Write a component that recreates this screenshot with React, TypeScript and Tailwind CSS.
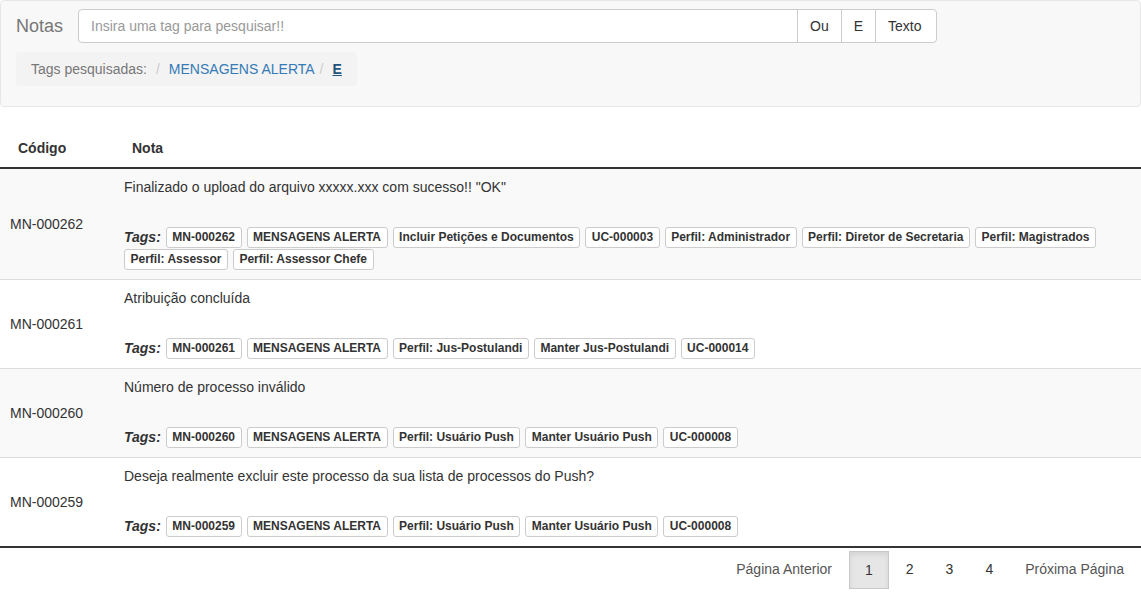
import React, { FC } from "react";

type Nota = {
  codigo: string;
  texto: string;
  tags: string[];
};

const notas: Nota[] = [
  {
    codigo: "MN-000262",
    texto: 'Finalizado o upload do arquivo xxxxx.xxx com sucesso!! "OK"',
    tags: [
      "MN-000262",
      "MENSAGENS ALERTA",
      "Incluir Petições e Documentos",
      "UC-000003",
      "Perfil: Administrador",
      "Perfil: Diretor de Secretaria",
      "Perfil: Magistrados",
      "Perfil: Assessor",
      "Perfil: Assessor Chefe",
    ],
  },
  {
    codigo: "MN-000261",
    texto: "Atribuição concluída",
    tags: [
      "MN-000261",
      "MENSAGENS ALERTA",
      "Perfil: Jus-Postulandi",
      "Manter Jus-Postulandi",
      "UC-000014",
    ],
  },
  {
    codigo: "MN-000260",
    texto: "Número de processo inválido",
    tags: [
      "MN-000260",
      "MENSAGENS ALERTA",
      "Perfil: Usuário Push",
      "Manter Usuário Push",
      "UC-000008",
    ],
  },
  {
    codigo: "MN-000259",
    texto: "Deseja realmente excluir este processo da sua lista de processos do Push?",
    tags: [
      "MN-000259",
      "MENSAGENS ALERTA",
      "Perfil: Usuário Push",
      "Manter Usuário Push",
      "UC-000008",
    ],
  },
];

const Tag: FC<{ label: string }> = ({ label }) => (
  <span className="inline-block rounded-[3px] border border-[#ccc] bg-white px-[5.5px] py-[1px] text-[12px] font-bold leading-[17px] text-[#333]">
    {label}
  </span>
);

const SearchBar: FC = () => (
  <div className="rounded-[4px] border border-[#e7e7e7] bg-[#f8f8f8] px-[15px] pt-[8px] pb-[20px]">
    <div className="flex items-center">
      <span className="text-[18px] leading-[20px] text-[#777]">Notas</span>
      <div className="ml-[15px] flex">
        <input
          className="h-[34px] w-[720px] rounded-l-[4px] border border-[#ccc] bg-white px-[12px] text-[14px] text-[#555] outline-none placeholder:text-[#999]"
          placeholder="Insira uma tag para pesquisar!!"
        />
        {["Ou", "E", "Texto"].map((b, i) => (
          <button
            key={b}
            className={
              "-ml-px h-[34px] border border-[#ccc] bg-white px-[12px] text-[14px] text-[#333] " +
              (i === 2 ? "rounded-r-[4px] pr-[14px]" : "")
            }
          >
            {b}
          </button>
        ))}
      </div>
    </div>
    <div className="mt-[9px] inline-flex items-center rounded-[4px] bg-[#f3f3f3] px-[15px] py-[7px] text-[14px] leading-[20px]">
      <span className="text-[#777]">Tags pesquisadas:</span>
      <span className="ml-[4px] px-[5px] text-[#ccc]">/</span>
      <span className="ml-[4px] text-[#337ab7]">MENSAGENS ALERTA</span>
      <span className="px-[5px] text-[#ccc]">/</span>
      <span className="ml-[4px] font-bold text-[#23527c] underline">E</span>
    </div>
  </div>
);

const Pagination: FC = () => {
  const item = "mx-[1px] px-[15px] py-[8px] leading-[20px]";
  return (
    <div className="mt-[3px] flex justify-end pr-px text-[14px] text-[#555]">
      <span className={item}>Página Anterior</span>
      <span
        className={
          item +
          " border border-[#c8c8c8] bg-[#e6e6e6] py-[7px] text-[#333] shadow-[inset_0_3px_5px_rgba(0,0,0,0.08)]"
        }
      >
        1
      </span>
      <span className={item + " text-[#333]"}>2</span>
      <span className={item + " text-[#333]"}>3</span>
      <span className={item + " text-[#333]"}>4</span>
      <span className={item}>Próxima Página</span>
    </div>
  );
};

const App: FC = () => {
  return (
    <div className="min-h-[600px] w-[1141px] bg-white font-['Liberation_Sans',Arial,sans-serif] text-[14px] text-[#333]">
      <SearchBar />

      <div className="mt-[22px]">
        <div className="flex border-b-2 border-[#333] py-[9px] font-bold leading-[20px]">
          <div className="w-[114px] pl-[18px]">Código</div>
          <div className="pl-[18px]">Nota</div>
        </div>

        {notas.map((n, i) => (
          <div
            key={n.codigo}
            className={
              "flex items-center " +
              (i % 2 === 0 ? "bg-[#f9f9f9] " : "bg-white ") +
              (i > 0 ? "border-t border-[#ddd] " : "") +
              (i === notas.length - 1 ? "border-b-2 border-b-[#333]" : "")
            }
          >
            <div className="w-[114px] shrink-0 pl-[10px] leading-[20px]">{n.codigo}</div>
            <div className="flex-1 pt-[8px] pr-[8px] pb-[9px] pl-[10px]">
              <p className="leading-[20px]">{n.texto}</p>
              <div className="mt-[30px] flex flex-wrap items-center gap-x-[5px] gap-y-[1px]">
                <span className="font-bold italic leading-[21px]">Tags:</span>
                {n.tags.map((t) => (
                  <Tag key={t} label={t} />
                ))}
              </div>
            </div>
          </div>
        ))}
      </div>

      <Pagination />
    </div>
  );
};

export default App;
